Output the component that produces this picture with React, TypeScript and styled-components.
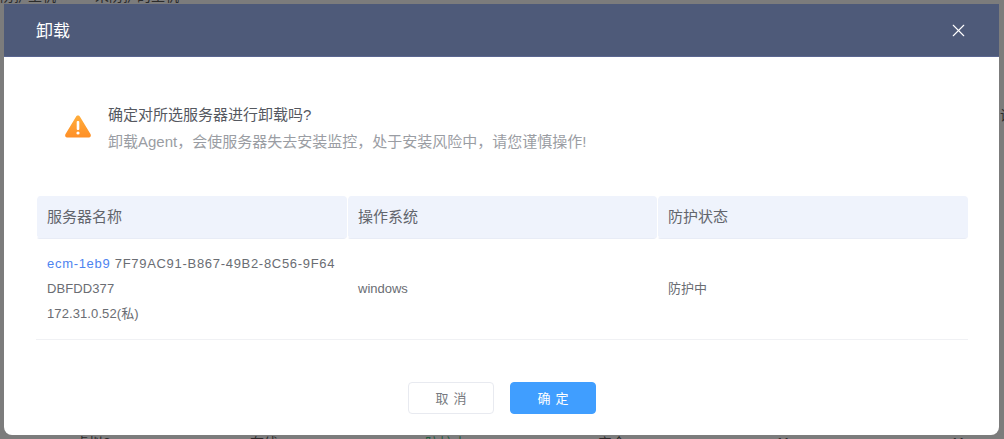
import React from 'react'
import styled, { createGlobalStyle } from 'styled-components'
import { X } from 'lucide-react'

const FONT = `"Liberation Sans", "Noto Sans CJK SC", sans-serif`

const GlobalStyle = createGlobalStyle`
  html, body {
    margin: 0;
    padding: 0;
    background: #7c7c7c;
    font-family: ${FONT};
  }
`

const Page = styled.div`
  width: 1004px;
  height: 439px;
  position: relative;
  overflow: hidden;
  background: #7c7c7c;
`

const Behind = styled.div`
  height: 100%;
  display: flex;
  flex-direction: column;
  justify-content: space-between;
  font-size: 14px;
  line-height: 16px;
  color: #2b2b2b;
`

const BehindRow = styled.div<{ $edge: 'top' | 'bottom' }>`
  height: 4px;
  overflow: hidden;
  display: flex;
  align-items: ${({ $edge }) => ($edge === 'top' ? 'flex-end' : 'flex-start')};
`

const BehindText = styled.span<{ $width: number; $green?: boolean }>`
  flex: none;
  width: ${({ $width }) => $width}px;
  white-space: nowrap;
  color: ${({ $green }) => ($green ? '#1f5a3c' : 'inherit')};
`

const BehindGlyph = styled.div`
  height: 16px;
  padding-left: 1000px;
  white-space: nowrap;
  margin-top: -210px;
`

const Modal = styled.div`
  position: absolute;
  left: 4px;
  top: 4px;
  width: 995px;
  height: 431px;
  display: flex;
  flex-direction: column;
  background: #fff;
  border-radius: 0 0 8px 8px;
  overflow: hidden;
`

const Header = styled.div`
  height: 53px;
  flex: none;
  box-sizing: border-box;
  display: flex;
  align-items: center;
  justify-content: space-between;
  padding: 0 30px 0 32px;
  background: #4e5a79;
  border-bottom: 1px solid #5a6690;
  color: #fff;
  font-size: 17px;
`

const HeaderTitle = styled.span`
  margin-top: -2px;
`

const CloseIcon = styled(X)`
  width: 21px;
  height: 21px;
  color: #fff;
`

const Body = styled.div`
  flex: 1;
  display: flex;
  flex-direction: column;
  padding: 0 32px;
`

const Notice = styled.div`
  display: flex;
  align-items: flex-start;
  gap: 16px;
  padding: 48px 0 0 28px;
  height: 139px;
  box-sizing: border-box;
`

const WarnIcon = styled.svg`
  width: 28px;
  height: 24px;
  margin-top: 9px;
  flex: none;
`

const NoticeText = styled.div`
  display: flex;
  flex-direction: column;
  gap: 8px;
`

const NoticeTitle = styled.div`
  font-size: 15px;
  line-height: 19px;
  color: #55585f;
`

const NoticeDesc = styled.div`
  font-size: 15px;
  line-height: 19px;
  color: #9a9da3;
`

const Table = styled.div`
  display: grid;
  grid-template-columns: 311px 310px 311px;
  margin-right: -1px;
`

const HeadCell = styled.div`
  height: 43px;
  display: flex;
  align-items: center;
  padding: 0 0 3px 10px;
  background: #eff3fc;
  background-clip: padding-box;
  border-bottom: 1px solid #e8ecf6;
  border-left: 1px solid #fff;
  box-sizing: border-box;
  border-radius: 4px;
  font-size: 15px;
  color: #62656c;
`

const Cell = styled.div`
  height: 101px;
  display: flex;
  flex-direction: column;
  justify-content: center;
  padding: 0 0 2px 11px;
  box-sizing: border-box;
  border-bottom: 1px solid #f0f1f4;
  font-size: 13px;
  line-height: 25px;
  color: #6a6d73;
`

const NameLine = styled.div<{ $wide?: boolean }>`
  white-space: nowrap;
  letter-spacing: ${({ $wide }) => ($wide ? '0.7px' : '0.1px')};
`

const ServerLink = styled.span`
  color: #4d84f0;
`

const Footer = styled.div`
  display: flex;
  justify-content: center;
  gap: 16px;
  margin-top: 42px;
`

const Button = styled.button<{ $primary?: boolean }>`
  width: 86px;
  height: 32px;
  box-sizing: border-box;
  padding: 0 0 1px 6px;
  border-radius: 4px;
  border: 1px solid ${({ $primary }) => ($primary ? '#409eff' : '#e8eaf0')};
  background: ${({ $primary }) => ($primary ? '#409eff' : '#fff')};
  color: ${({ $primary }) => ($primary ? '#fff' : '#777a80')};
  font-family: ${FONT};
  font-size: 13px;
  letter-spacing: 5px;
`

export default function App() {
  return (
    <Page>
      <GlobalStyle />
      <Behind>
        <BehindRow $edge="top">
          <BehindText $width={95}>防护主机</BehindText>
          <BehindText $width={200}>未防护的主机</BehindText>
        </BehindRow>
        <BehindGlyph>设</BehindGlyph>
        <BehindRow $edge="bottom">
          <BehindText $width={75}></BehindText>
          <BehindText $width={175}>虚拟2</BehindText>
          <BehindText $width={175}>在线</BehindText>
          <BehindText $width={173} $green>防护中</BehindText>
          <BehindText $width={178}>安全</BehindText>
          <BehindText $width={175}>11</BehindText>
          <BehindText $width={20}>11</BehindText>
        </BehindRow>
      </Behind>
      <Modal>
        <Header>
          <HeaderTitle>卸载</HeaderTitle>
          <CloseIcon strokeWidth={1.3} />
        </Header>
        <Body>
          <Notice>
            <WarnIcon viewBox="0 0 28 24">
              <defs>
                <linearGradient id="warn" x1="0" y1="0" x2="0" y2="1">
                  <stop offset="0" stopColor="#ffad3b" />
                  <stop offset="1" stopColor="#ff8f26" />
                </linearGradient>
              </defs>
              <path
                d="M14 1.5c.9 0 1.6.5 2 1.2l10.6 17.6c.8 1.4-.1 3.2-1.8 3.2H3.2c-1.7 0-2.6-1.8-1.8-3.2L12 2.7c.4-.7 1.1-1.2 2-1.2z"
                fill="url(#warn)"
              />
              <rect x="12.7" y="7" width="2.6" height="9" rx="1" fill="#fff" />
              <circle cx="14" cy="19" r="1.6" fill="#fff" />
            </WarnIcon>
            <NoticeText>
              <NoticeTitle>确定对所选服务器进行卸载吗?</NoticeTitle>
              <NoticeDesc>卸载Agent，会使服务器失去安装监控，处于安装风险中，请您谨慎操作!</NoticeDesc>
            </NoticeText>
          </Notice>
          <Table>
            <HeadCell>服务器名称</HeadCell>
            <HeadCell>操作系统</HeadCell>
            <HeadCell>防护状态</HeadCell>
            <Cell>
              <NameLine $wide>
                <ServerLink>ecm-1eb9</ServerLink> 7F79AC91-B867-49B2-8C56-9F64
              </NameLine>
              <NameLine>DBFDD377</NameLine>
              <NameLine>172.31.0.52(私)</NameLine>
            </Cell>
            <Cell>windows</Cell>
            <Cell>防护中</Cell>
          </Table>
          <Footer>
            <Button>取消</Button>
            <Button $primary>确定</Button>
          </Footer>
        </Body>
      </Modal>
    </Page>
  )
}
